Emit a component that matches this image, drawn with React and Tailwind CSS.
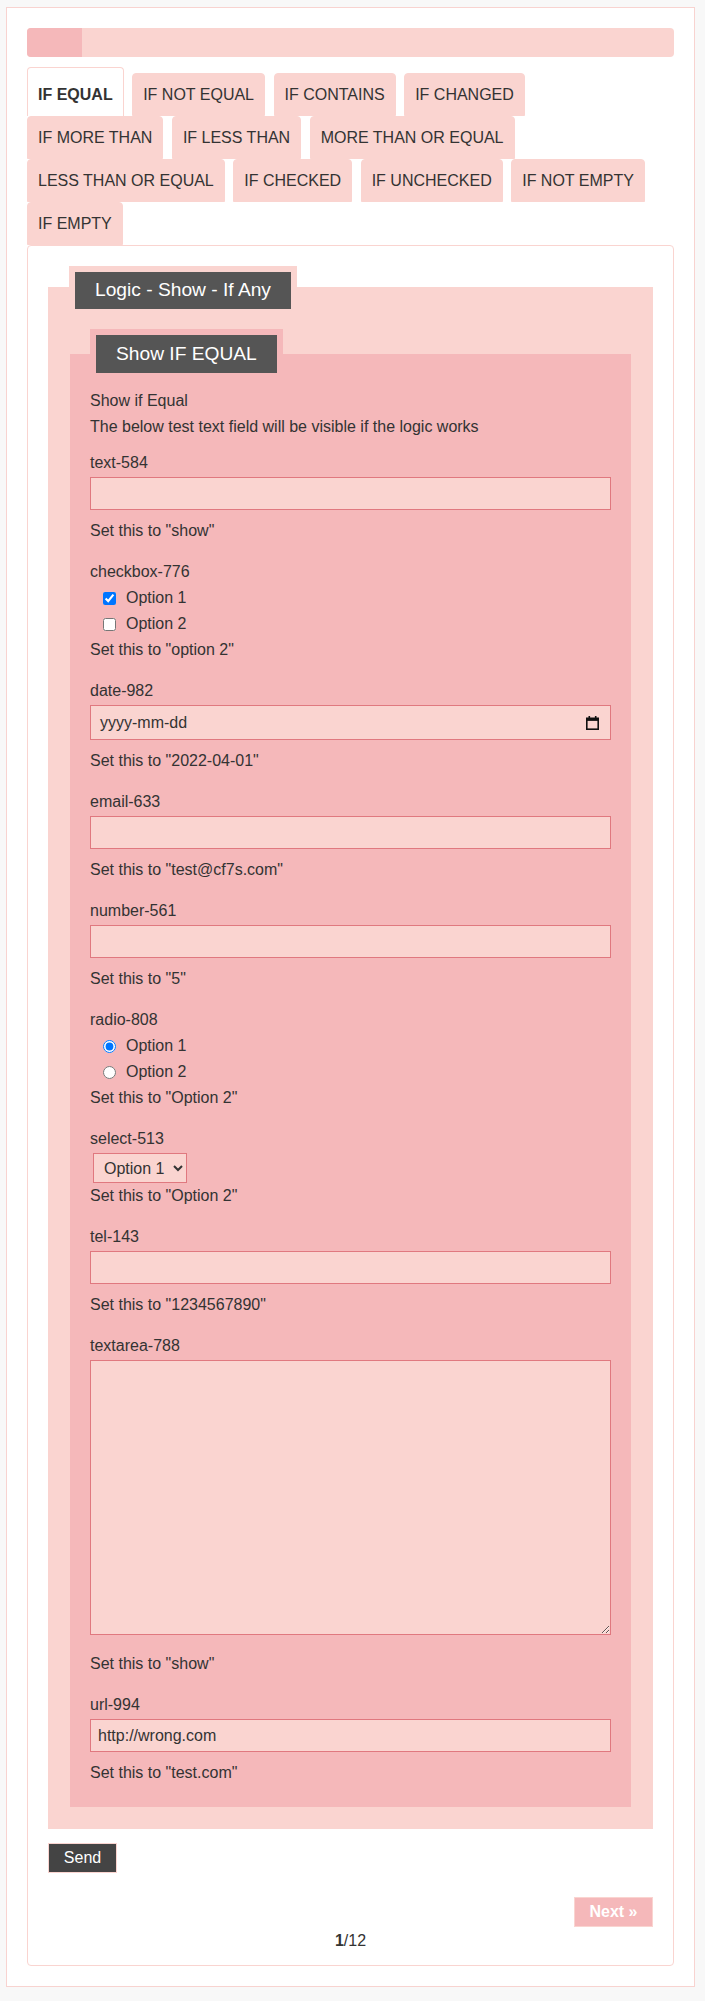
import React from "react";

const rows = [
  ["IF EQUAL", "IF NOT EQUAL", "IF CONTAINS", "IF CHANGED"],
  ["IF MORE THAN", "IF LESS THAN", "MORE THAN OR EQUAL"],
  ["LESS THAN OR EQUAL", "IF CHECKED", "IF UNCHECKED", "IF NOT EMPTY"],
  ["IF EMPTY"],
];

function Line({ children, className = "" }) {
  return <div className={"leading-[26px] " + className}>{children}</div>;
}

function TextGroup({ label, hint, value = "" }) {
  return (
    <div className="mb-[15px] flex flex-col">
      <Line>{label}</Line>
      <input
        type="text"
        defaultValue={value}
        className="mt-px h-[33px] w-full border border-[#e0787f] bg-[#fad4d0] px-[7px] text-[16px] text-[#333] outline-none"
      />
      <Line className="mt-2">{hint}</Line>
    </div>
  );
}

function Choice({ type, checked, name, children }) {
  return (
    <label className="flex h-[26px] items-center">
      <input
        type={type}
        name={name}
        defaultChecked={checked}
        className="ml-[13px] m-0 h-[13px] w-[13px] accent-[#0075ff]"
      />
      <span className="ml-[10px]">{children}</span>
    </label>
  );
}

function Calendar() {
  return (
    <svg width="13" height="14" viewBox="0 0 13 14" fill="none">
      <rect x="2.5" y="0" width="1.6" height="3" fill="#111" />
      <rect x="8.9" y="0" width="1.6" height="3" fill="#111" />
      <rect x="0.8" y="2.3" width="11.4" height="10.9" stroke="#111" strokeWidth="1.6" />
      <rect x="0.8" y="2.3" width="11.4" height="2.6" fill="#111" />
    </svg>
  );
}

export default function App() {
  return (
    <div className="bg-[#f8f8f8] pl-[6px] pt-[7px] pb-[15px] font-['Liberation_Sans',Arial,sans-serif] text-[16px] text-[#333]">
      <div className="w-[689px] border border-[#f8d3d0] bg-white p-5">
        {/* progress */}
        <div className="h-[29px] w-full overflow-hidden rounded-[4px] bg-[#fad4d0]">
          <div className="h-full w-[55px] bg-[#f5b8ba]" />
        </div>

        {/* tabs */}
        <div className="mt-[10px] flex flex-col">
          {rows.map((row, ri) => (
            <div key={ri} className="flex items-end gap-x-[8.5px]">
              {row.map((t) =>
                t === "IF EQUAL" ? (
                  <div
                    key={t}
                    className="flex h-[49px] items-center rounded-t-[4px] border border-b-0 border-[#fad4d0] bg-white px-[10px] pt-[5px] font-bold text-[#333]"
                  >
                    {t}
                  </div>
                ) : (
                  <div
                    key={t}
                    className="flex h-[43px] items-center rounded-t-[4px] border border-[#fad4d0] bg-[#fad4d0] px-[10px] text-[#333]"
                  >
                    {t}
                  </div>
                )
              )}
            </div>
          ))}
        </div>

        {/* panel */}
        <div className="flex flex-col rounded-[4px] border border-[#fad4d0] px-5 pt-5 pb-[11px]">
          <div className="mt-[21px] flex flex-col bg-[#fad4d0] px-[22px] pb-[22px]">
            <div className="-mt-[21px] -ml-px flex h-[49px] items-center self-start border-[6px] border-[#fad4d0] bg-[#555555] px-5 text-[19.2px] text-white">
              Logic - Show - If Any
            </div>

            <div className="mt-[39px] flex flex-col bg-[#f5b8ba] px-5 pb-[21px]">
              <div className="-mt-[25px] flex h-[50px] items-center self-start border-[6px] border-[#f5b8ba] bg-[#555555] px-5 text-[19.2px] text-white">
                Show IF EQUAL
              </div>

              <Line className="mt-[9px]">Show if Equal</Line>
              <Line>The below test text field will be visible if the logic works</Line>

              <div className="mt-[10px]" />
              <TextGroup label="text-584" hint={'Set this to "show"'} />

              <div className="mb-[15px] flex flex-col">
                <Line>checkbox-776</Line>
                <Choice type="checkbox" checked>Option 1</Choice>
                <Choice type="checkbox">Option 2</Choice>
                <Line>Set this to "option 2"</Line>
              </div>

              <div className="mb-[15px] flex flex-col">
                <Line>date-982</Line>
                <div className="mt-px flex h-[35px] w-full items-center justify-between border border-[#e0787f] bg-[#fad4d0] pl-[9px] pr-[11px]">
                  <span>yyyy-mm-dd</span>
                  <Calendar />
                </div>
                <Line className="mt-2">Set this to "2022-04-01"</Line>
              </div>

              <TextGroup label="email-633" hint={'Set this to "test@cf7s.com"'} />
              <TextGroup label="number-561" hint={'Set this to "5"'} />

              <div className="mb-[15px] flex flex-col">
                <Line>radio-808</Line>
                <Choice type="radio" name="radio-808" checked>Option 1</Choice>
                <Choice type="radio" name="radio-808">Option 2</Choice>
                <Line>Set this to "Option 2"</Line>
              </div>

              <div className="mb-[15px] flex flex-col">
                <Line>select-513</Line>
                <select
                  defaultValue="Option 1"
                  className="ml-[3px] mt-px h-[30px] w-[94px] self-start border border-[#e0787f] bg-[#fad4d0] pl-[6px] text-[16px] text-[#333]"
                >
                  <option>Option 1</option>
                  <option>Option 2</option>
                </select>
                <Line>Set this to "Option 2"</Line>
              </div>

              <TextGroup label="tel-143" hint={'Set this to "1234567890"'} />

              <div className="mb-[15px] flex flex-col">
                <Line>textarea-788</Line>
                <textarea className="mt-px block h-[275px] w-full resize border border-[#e0787f] bg-[#fad4d0] outline-none" />
                <Line className="mt-4">Set this to "show"</Line>
              </div>

              <div className="flex flex-col">
                <Line>url-994</Line>
                <input
                  type="text"
                  defaultValue="http://wrong.com"
                  className="mt-px h-[33px] w-full border border-[#e0787f] bg-[#fad4d0] px-[7px] text-[16px] text-[#333] outline-none"
                />
                <Line className="mt-2">Set this to "test.com"</Line>
              </div>
            </div>
          </div>

          <div className="mt-[14px] flex">
            <button className="flex h-[30px] w-[69px] items-center justify-center border border-[#fad4d0] bg-[#444444] text-white">
              Send
            </button>
          </div>

          <div className="mt-[24px] flex justify-end">
            <button className="flex h-[30px] w-[79px] items-center justify-center border border-[#fad4d0] bg-[#f5b8ba] font-bold text-white">
              Next »
            </button>
          </div>

          <div className="mt-px text-center leading-[26px]">
            <span className="font-bold">1</span>/12
          </div>
        </div>
      </div>
    </div>
  );
}
